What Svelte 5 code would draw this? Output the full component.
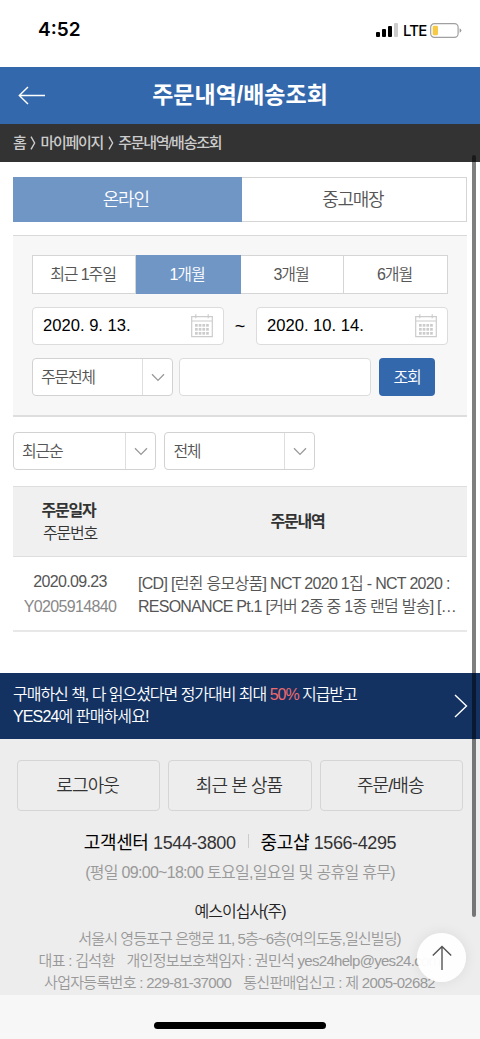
<script lang="ts">
  const periods = ['최근 1주일', '1개월', '3개월', '6개월']
  const dates = ['2020. 9. 13.', '2020. 10. 14.']
  const footerLinks = ['로그아웃', '최근 본 상품', '주문/배송']

  let store = $state('온라인')
  let period = $state('1개월')
  let keyword = $state('')
</script>

{#snippet chevron()}
  <span class="select-arrow">
    <svg width="14" height="9" viewBox="0 0 14 9"><path d="M1 1.2 7 7.4l6-6.2" /></svg>
  </span>
{/snippet}

{#snippet calendar()}
  <svg class="calendar" width="22" height="24" viewBox="0 0 22 24">
    <path class="frame" d="M.7 2.7h20.6v20H.7zM.7 7h20.6M4.8.3v4M17.2.3v4" />
    {#each [10, 14, 18] as y}
      {#each [4, 7.7, 11.4, 15.1] as x}
        <rect {x} {y} width="2.7" height="2.7" />
      {/each}
    {/each}
  </svg>
{/snippet}

<div class="screen">
  <div class="status-bar">
    <span class="clock">4:52</span>
    <div class="status-icons">
      <svg width="22" height="14" viewBox="0 0 22 14">
        <rect x="0" y="9" width="4" height="5" rx="1" />
        <rect x="6" y="6" width="4" height="8" rx="1" />
        <rect x="12" y="3" width="4" height="11" rx="1" />
        <rect x="18" y="0" width="4" height="14" rx="1" fill="#ccc" />
      </svg>
      <span class="network">LTE</span>
      <svg width="32" height="15" viewBox="0 0 32 15">
        <rect x=".7" y=".7" width="27.4" height="13.6" rx="3.6" fill="none" stroke="#a0a0a0" stroke-width="1.2" />
        <rect x="2.7" y="2.7" width="5.3" height="9.6" rx="1.4" fill="#f7ca45" />
        <path class="battery-tip" d="M29.6 5.2q1.8.8 1.8 2.3t-1.8 2.3z" />
      </svg>
    </div>
  </div>

  <header>
    <svg class="back" width="28" height="19" viewBox="0 0 28 19"><path d="M10 1 1.3 9.5 10 18M1.3 9.5H27" /></svg>
    <h1>주문내역/배송조회</h1>
  </header>

  <nav class="breadcrumb">
    <span>홈</span>
    <svg width="6" height="14" viewBox="0 0 6 14"><path d="m1 .7 3.6 6.3L1 13.3" /></svg>
    <span>마이페이지</span>
    <svg width="6" height="14" viewBox="0 0 6 14"><path d="m1 .7 3.6 6.3L1 13.3" /></svg>
    <span>주문내역/배송조회</span>
  </nav>

  <main>
    <div class="store-tabs">
      {#each ['온라인', '중고매장'] as name}
        <button class:active={store === name} onclick={() => (store = name)}>{name}</button>
      {/each}
    </div>

    <section class="search">
      <div class="periods">
        {#each periods as name}
          <button class:active={period === name} onclick={() => (period = name)}>{name}</button>
        {/each}
      </div>
      <div class="dates">
        <div class="date">{dates[0]}{@render calendar()}</div>
        <span class="tilde">~</span>
        <div class="date">{dates[1]}{@render calendar()}</div>
      </div>
      <div class="query">
        <div class="select kind"><span>주문전체</span>{@render chevron()}</div>
        <input type="text" bind:value={keyword} aria-label="검색어" />
        <button class="submit">조회</button>
      </div>
    </section>

    <div class="sorting">
      <div class="select order"><span>최근순</span>{@render chevron()}</div>
      <div class="select scope"><span>전체</span>{@render chevron()}</div>
    </div>

    <section class="orders">
      <div class="row head">
        <div class="col-date"><strong>주문일자</strong><span>주문번호</span></div>
        <div class="col-title"><strong>주문내역</strong></div>
      </div>
      <div class="row item">
        <div class="col-date"><span>2020.09.23</span><span class="number">Y0205914840</span></div>
        <div class="col-title">
          <span>[CD] [런쥔 응모상품] NCT 2020 1집 - NCT 2020 :</span>
          <span class="second">RESONANCE Pt.1 [커버 2종 중 1종 랜덤 발송] […</span>
        </div>
      </div>
    </section>
  </main>

  <div class="banner">
    <p>
      <span class="lead">구매하신 책, 다 읽으셨다면 정가대비 최대 <em>50%</em> 지급받고</span>
      <span>YES24에 판매하세요!</span>
    </p>
    <svg width="14" height="24" viewBox="0 0 14 24"><path d="m1 1 11.5 11L1 23" /></svg>
  </div>

  <footer>
    <div class="links">
      {#each footerLinks as link}
        <button>{link}</button>
      {/each}
    </div>
    <div class="phones">
      <span><b>고객센터</b> 1544-3800</span>
      <i></i>
      <span><b>중고샵</b> 1566-4295</span>
    </div>
    <p class="hours">(평일 09:00~18:00 토요일,일요일 및 공휴일 휴무)</p>
    <p class="company">예스이십사(주)</p>
    <div class="address">
      <p class="street">서울시 영등포구 은행로 11, 5층~6층(여의도동,일신빌딩)</p>
      <p class="people"><span>대표 : 김석환</span><span>개인정보보호책임자 : 권민석 yes24help@yes24.com</span></p>
      <p class="license"><span>사업자등록번호 : 229-81-37000</span><span>통신판매업신고 : 제 2005-02682</span></p>
    </div>
  </footer>

  <div class="home-area"><div class="home-indicator"></div></div>

  <div class="scrollbar"></div>
  <button class="top" aria-label="맨 위로">
    <svg width="20" height="26" viewBox="0 0 20 26"><path d="M10 25V1.5M.8 10.4 10 1.4l9.2 9" /></svg>
  </button>
</div>

<style>
  :global(body) {
    margin: 0;
    background: #fff;
  }

  .screen {
    position: relative;
    display: flex;
    flex-direction: column;
    width: 480px;
    height: 1039px;
    overflow: hidden;
    background: #fff;
    color: #555;
    font-family: 'Liberation Sans', 'Noto Sans CJK KR', sans-serif;
    font-size: 16px;
    font-weight: 350;
    letter-spacing: -1.28px;
    white-space: nowrap;
  }

  * {
    box-sizing: border-box;
  }

  button,
  input {
    margin: 0;
    padding: 0;
    border: 0;
    background: none;
    color: inherit;
    font: inherit;
    letter-spacing: inherit;
  }

  h1,
  p {
    margin: 0;
  }

  svg {
    flex-shrink: 0;
  }

  path {
    fill: none;
  }

  .status-bar {
    display: flex;
    align-items: flex-start;
    justify-content: space-between;
    height: 67px;
    padding: 17px 18px 0 38px;
    color: #000;
    font-family: Inter, sans-serif;
    letter-spacing: 0;
  }

  .clock {
    font-size: 19px;
    font-weight: 600;
    line-height: 26px;
  }

  .status-icons {
    display: flex;
    align-items: center;
    height: 26px;
  }

  .network {
    width: 23px;
    margin: 0 4px 0 5px;
    font-size: 15px;
    font-weight: 500;
    letter-spacing: -0.8px;
  }

  .battery-tip {
    fill: #999;
  }

  header {
    display: grid;
    grid-template-columns: 152px 1fr 152px;
    align-items: center;
    height: 57px;
    background: #3468ad;
    color: #fff;
  }

  .back {
    margin-left: 18px;
  }

  .back path {
    stroke: #fff;
    stroke-width: 1.4;
  }

  h1 {
    padding-bottom: 2px;
    font-size: 23px;
    font-weight: 700;
    line-height: 32px;
    letter-spacing: 0;
    text-align: center;
  }

  .breadcrumb {
    display: flex;
    align-items: center;
    gap: 4.5px;
    height: 38px;
    padding-left: 13px;
    background: #333;
    color: #ccc;
    font-size: 15px;
    font-weight: 500;
  }

  .breadcrumb span {
    padding-bottom: 3px;
  }

  .breadcrumb path {
    stroke: #ccc;
    stroke-width: 1.4;
  }

  main {
    height: 511px;
    padding: 15px 13px 0;
  }

  .store-tabs {
    display: grid;
    grid-template-columns: 228.5px 1fr;
    height: 45px;
    font-size: 18px;
  }

  .store-tabs button,
  .periods button {
    padding: 0 2px 3px 0;
    border: 1px solid #d5d5d5;
    border-left: 0;
    background: #fff;
  }

  .store-tabs .active,
  .periods .active {
    border-color: #7096c6;
    background: #7096c6;
    color: #fff;
  }

  .search {
    height: 182px;
    margin-top: 13px;
    padding: 19px 19px 0;
    border-top: 1px solid #d9d9d9;
    border-bottom: 2px solid #dedede;
    background: #f7f7f7;
  }

  .periods {
    display: grid;
    grid-template-columns: 104px 105px 103px 1fr;
    height: 39px;
    letter-spacing: -1.1px;
  }

  .periods button:first-child {
    border-left: 1px solid #d5d5d5;
  }

  .dates {
    display: flex;
    align-items: center;
    justify-content: space-between;
    margin-top: 13px;
    color: #000;
    font-size: 16.6px;
    font-weight: 400;
    letter-spacing: 0;
  }

  .date {
    display: flex;
    align-items: center;
    justify-content: space-between;
    width: 192px;
    height: 38px;
    padding: 0 10px;
    border: 1px solid #dcdcdc;
    border-radius: 4px;
    background: #fff;
  }

  .tilde {
    font-size: 18px;
  }

  .calendar .frame {
    stroke: #ccc;
    stroke-width: 1.2;
  }

  .calendar rect {
    fill: #ccc;
  }

  .query {
    display: flex;
    margin-top: 13px;
  }

  .select {
    display: flex;
    align-items: center;
    justify-content: space-between;
    height: 38px;
    padding-left: 8px;
    border: 1px solid #d2d2d2;
    border-radius: 4px;
    background: #fff;
  }

  .select > span:first-child {
    padding-bottom: 2px;
  }

  .select-arrow {
    display: flex;
    align-items: center;
    justify-content: center;
    width: 30px;
    height: 100%;
    border-left: 1px solid #dedede;
  }

  .select-arrow path {
    stroke: #999;
    stroke-width: 1.3;
  }

  .kind {
    width: 141px;
  }

  input {
    width: 192px;
    height: 38px;
    margin: 0 8px 0 6px;
    border: 1px solid #dcdcdc;
    border-radius: 4px;
    background: #fff;
  }

  .submit {
    width: 56px;
    height: 38px;
    padding-bottom: 2px;
    border-radius: 4px;
    background: #3468ad;
    color: #fff;
  }

  .sorting {
    display: flex;
    gap: 8px;
    margin-top: 15px;
  }

  .order {
    width: 143.4px;
  }

  .scope {
    width: 151px;
  }

  .orders {
    margin-top: 16px;
    border-top: 1px solid #dedede;
    border-bottom: 2px solid #e8e8e8;
  }

  .row {
    display: grid;
    grid-template-columns: 115px 1fr;
    align-items: center;
  }

  .row span,
  .row strong {
    display: block;
  }

  .col-date {
    padding-right: 1px;
    text-align: center;
  }

  .head {
    height: 70px;
    border-bottom: 1px solid #dedede;
    background: #f0f0f0;
    color: #333;
    line-height: 23px;
  }

  .head strong {
    font-weight: 700;
  }

  .head .col-date strong {
    padding-right: 3px;
  }

  .head .col-title {
    text-align: center;
  }

  .item {
    height: 73px;
    line-height: 25px;
    letter-spacing: -0.64px;
  }

  .item .col-title {
    padding: 2px 0 0 10px;
    line-height: 23px;
    letter-spacing: -0.7px;
  }

  .item .second {
    letter-spacing: -0.75px;
  }

  .number {
    color: #888;
  }

  .banner {
    display: flex;
    align-items: center;
    justify-content: space-between;
    height: 66px;
    padding: 0 12px 0 13px;
    background: #133262;
    color: #fff;
    line-height: 22px;
    letter-spacing: -0.88px;
  }

  .banner span {
    display: block;
  }

  .banner .lead {
    letter-spacing: -1.03px;
  }

  .banner em {
    color: #ee6b6e;
    font-style: normal;
  }

  .banner path {
    stroke: #fff;
    stroke-width: 1.4;
  }

  footer {
    height: 256px;
    padding: 21px 17px 0;
    overflow: hidden;
    background: #ededed;
    color: #999;
    text-align: center;
  }

  .links {
    display: grid;
    grid-template-columns: repeat(3, 1fr);
    gap: 8px;
  }

  .links button {
    height: 51px;
    padding: 0 2px 3px 0;
    border: 1px solid #d5d5d5;
    border-radius: 4px;
    color: #333;
    font-size: 18px;
    letter-spacing: -0.9px;
  }

  .phones {
    display: flex;
    align-items: center;
    justify-content: center;
    height: 26px;
    margin-top: 17px;
    color: #333;
    font-size: 18px;
    letter-spacing: -0.4px;
  }

  .phones b {
    color: #000;
    font-weight: 400;
  }

  .phones i {
    width: 1px;
    height: 14px;
    margin: 0 12px;
    background: #ccc;
  }

  .hours {
    margin-top: 7px;
    line-height: 24px;
    letter-spacing: -0.7px;
  }

  .company {
    margin-top: 15px;
    color: #222;
    line-height: 24px;
    letter-spacing: -1px;
  }

  .address {
    margin-top: 4px;
    padding-right: 1px;
    font-size: 15px;
    line-height: 22px;
  }

  .street {
    letter-spacing: -0.9px;
  }

  .people,
  .license {
    display: flex;
    justify-content: center;
    gap: 12px;
    letter-spacing: -0.7px;
  }

  .home-area {
    display: flex;
    justify-content: center;
    height: 44px;
    padding-top: 27px;
    background: #f7f7f7;
  }

  .home-indicator {
    width: 172px;
    height: 7px;
    border-radius: 4px;
    background: #000;
  }

  .scrollbar {
    position: absolute;
    top: 155px;
    left: 472px;
    width: 4px;
    height: 762px;
    border-radius: 2px;
    background: rgba(0, 0, 0, 0.5);
  }

  .top {
    position: absolute;
    top: 933px;
    left: 417px;
    display: flex;
    align-items: center;
    justify-content: center;
    width: 49px;
    height: 49px;
    border-radius: 50%;
    background: rgba(255, 255, 255, 0.95);
    box-shadow: 0 0 14px rgba(0, 0, 0, 0.08);
  }

  .top path {
    stroke: #555;
    stroke-width: 1.4;
  }
</style>
